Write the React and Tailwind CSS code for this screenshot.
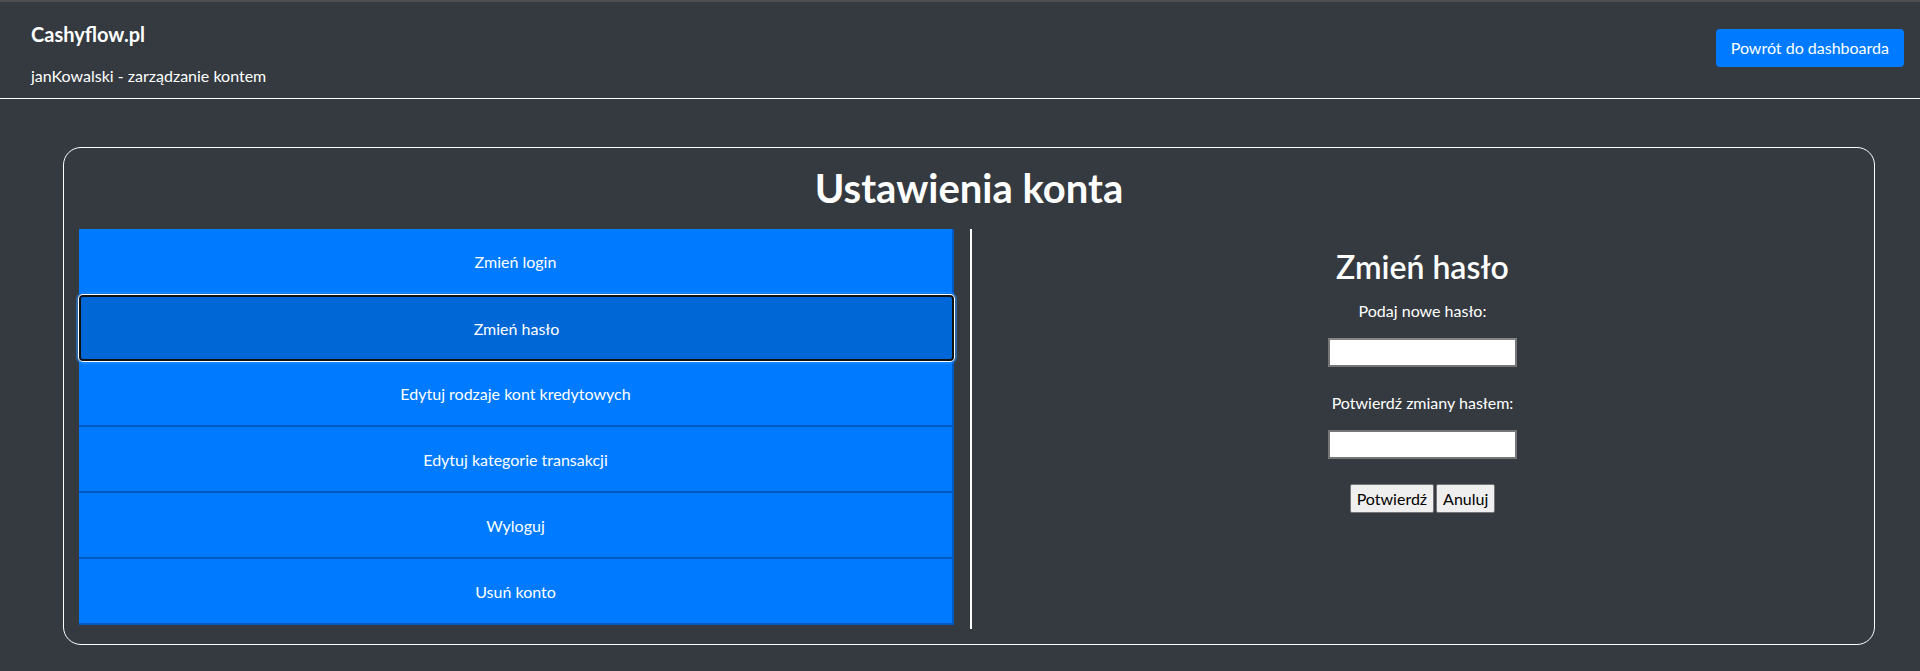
import React from 'react'

const items = [
  'Zmień login',
  'Zmień hasło',
  'Edytuj rodzaje kont kredytowych',
  'Edytuj kategorie transakcji',
  'Wyloguj',
  'Usuń konto',
]

export default function App() {
  const active = 1

  return (
    <div className="min-h-[671px] bg-[#343a40] text-white font-['Lato','Liberation_Sans',sans-serif]">
      <div className="h-[2px] bg-[#4d4d4d]"></div>

      <header className="flex justify-between items-start h-[97px] border-b border-white pl-[31px] pr-[16px]">
        <div className="pt-[20px]">
          <div className="text-[20px] leading-[24px] font-bold">Cashyflow.pl</div>
          <div className="mt-[18px] text-[16px] leading-[24px]">janKowalski - zarządzanie kontem</div>
        </div>
        <button className="mt-[27px] h-[38px] px-[15px] rounded-[4px] bg-[#007bff] text-white text-[16px]">
          Powrót do dashboarda
        </button>
      </header>

      <main className="pt-[48px] pl-[63px]">
        <section className="w-[1812px] h-[498px] border border-white rounded-[18px] px-[15px] pt-[16px]">
          <h1 className="text-center text-[40px] leading-[48px] font-bold">Ustawienia konta</h1>

          <div className="flex mt-[17px]">
            <nav className="w-[875px] flex flex-col">
              {items.map((label, i) => (
                <button
                  key={label}
                  className={
                    i === active
                      ? 'relative z-10 h-[66px] pt-[2px] text-[16px] bg-[#0067d6] border-2 border-[#111] rounded-[4px] shadow-[0_0_0_1px_#ffffff,0_0_0_3px_rgba(38,143,255,0.5)]'
                      : 'h-[66px] pt-[2px] text-[16px] bg-[#007bff] border-b-2 border-r-2 border-[#0059c0]'
                  }
                >
                  {label}
                </button>
              ))}
            </nav>

            <div className="ml-[16px] w-[2px] h-[400px] bg-white"></div>

            <div className="flex-1 flex flex-col items-center pl-[14px] pt-[19px]">
              <h2 className="text-[32px] leading-[38px] font-semibold">Zmień hasło</h2>
              <label className="mt-[13px] text-[16px] leading-[24px]">Podaj nowe hasło:</label>
              <input
                type="password"
                className="mt-[15px] w-[189px] h-[29px] bg-white border-2 border-[#767676] border-t-[#858585]"
              />
              <label className="mt-[24px] text-[16px] leading-[24px]">Potwierdź zmiany hasłem:</label>
              <input
                type="password"
                className="mt-[15px] w-[189px] h-[29px] bg-white border-2 border-[#767676]"
              />
              <div className="mt-[25px] flex gap-[2px]">
                <button className="h-[29px] px-[6px] bg-[#efefef] text-black text-[16px] border border-[#767676] rounded-[2px]">
                  Potwierdź
                </button>
                <button className="h-[29px] px-[6px] bg-[#efefef] text-black text-[16px] border border-[#767676] rounded-[2px]">
                  Anuluj
                </button>
              </div>
            </div>
          </div>
        </section>
      </main>
    </div>
  )
}
